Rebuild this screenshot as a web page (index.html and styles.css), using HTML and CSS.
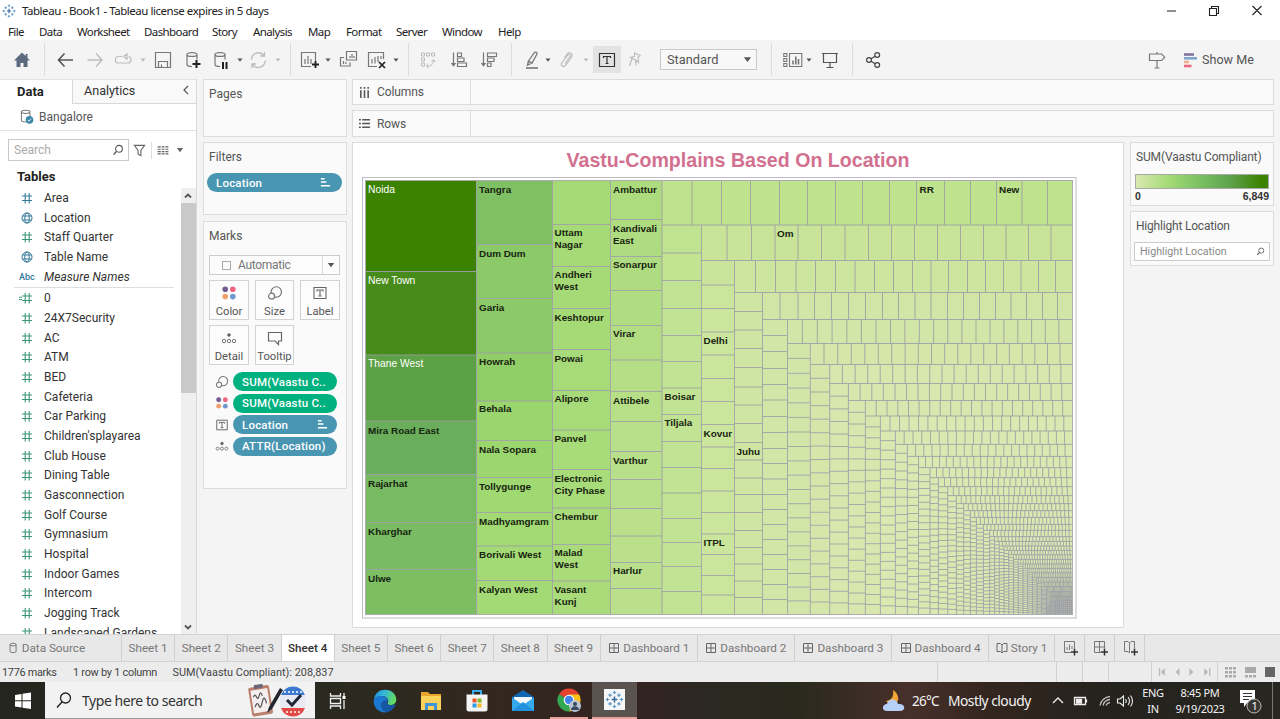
FILE: index.html
```html
<!DOCTYPE html>
<html lang="en">
<head>
<meta charset="utf-8">
<title>Tableau - Book1</title>
<link rel="stylesheet" href="styles.css">
</head>
<body>
<svg class="defs" width="0" height="0">
  <symbol id="caret" viewBox="0 0 8 8"><path d="M1.5 2.5h5L4 5.8z" fill="currentColor"/></symbol>
  <symbol id="down" viewBox="0 0 8 8"><path d="M.8 2h6.4L4 6.2z" fill="currentColor"/></symbol>
  <symbol id="mag" viewBox="0 0 12 12"><circle cx="7" cy="4.8" r="3.4" fill="none" stroke="currentColor" stroke-width="1.1"/><path d="M4.6 7.2 1.6 10.6" stroke="currentColor" stroke-width="1.4"/></symbol>
  <symbol id="dots" viewBox="0 0 16 16"><circle cx="4.2" cy="4.2" r="2.8" fill="#6f5b8f"/><circle cx="11.8" cy="4.2" r="2.8" fill="#ee6480"/><circle cx="4.2" cy="11.6" r="2.8" fill="#f0a06c"/><circle cx="11.8" cy="11.6" r="2.8" fill="#6f97cf"/></symbol>
  <symbol id="size" viewBox="0 0 16 16"><g fill="none" stroke="#777" stroke-width="1.2"><path d="M4.2 8A5.2 5.2 0 1 1 8 12"/><circle cx="4.6" cy="11.2" r="3"/></g></symbol>
  <symbol id="label" viewBox="0 0 16 16"><path d="M2 2.5h12v11H2z" fill="none" stroke="#666" stroke-width="1.1"/><path d="M5 6.5V5h6v1.500M8 5v6M6.500 11h3" fill="none" stroke="#666" stroke-width="1.1"/></symbol>
  <symbol id="detail" viewBox="0 0 16 16"><circle cx="8" cy="5" r="1.800" fill="#666"/><g fill="none" stroke="#777"><circle cx="3" cy="11" r="1.700"/><circle cx="8" cy="11" r="1.700"/><circle cx="13" cy="11" r="1.700"/></g></symbol>
  <symbol id="sorted" viewBox="0 0 12 12"><path d="M1 1.800h4M1 5.500h6M1 9.500h10" stroke="#fff" stroke-width="1.600"/></symbol>
  <symbol id="dash" viewBox="0 0 12 12"><path d="M1.500 1.500h9v9h-9zM6 1.500v9M1.500 6h9" fill="none" stroke="#666"/></symbol>
  <symbol id="book" viewBox="0 0 12 12"><path d="M6 3 4.500 1.500H1v8h3.500L6 11l1.500-1.500H11v-8H7.500zM6 3v8" fill="none" stroke="#666"/></symbol>
  <symbol id="logo" viewBox="0 0 16 16"><path d="M8 5.500v5M5.500 8h5" stroke="#35699f" stroke-width="1.300"/><path d="M8 .5v3M6.500 2h3M8 12.500v3M6.500 14h3M.5 8h3M2 6.500v3M12.500 8h3M14 6.500v3M4.200 2.800v3M2.700 4.300h3M11.800 2.800v3M10.300 4.300h3M4.200 10.200v3M2.700 11.700h3M11.800 10.200v3M10.300 11.700h3" stroke="#5d95c5"/></symbol>
  <symbol id="db" viewBox="0 0 20 20"><path d="M4 4.500v10c0 1 2 2 5 2M14 4.500v5M4 4.500c0-2.600 10-2.600 10 0s-10 2.600-10 0" fill="none" stroke="currentColor" stroke-width="1.200"/></symbol>
</svg>

<header class="titlebar">
  <svg class="applogo"><use href="#logo"/></svg>
  <span class="apptitle">Tableau - Book1 - Tableau license expires in 5 days</span>
  <svg class="winbtns" viewBox="0 0 100 20"><g fill="none" stroke="#222" stroke-width="1.100"><path d="M2 10h9M44.500 7.500h7v7h-7zM46.500 7.500v-2h7v7h-2M87.500 5l9 9M96.500 5l-9 9"/></g></svg>
</header>
<nav class="menubar">
  <span class="m1">File</span><span class="m2">Data</span><span class="m3">Worksheet</span><span class="m4">Dashboard</span><span class="m5">Story</span><span class="m6">Analysis</span><span class="m7">Map</span><span class="m8">Format</span><span class="m9">Server</span><span class="m10">Window</span><span>Help</span>
</nav>

<div class="toolbar">
  <svg class="ic g12" viewBox="0 0 20 20"><path d="M10 2.500 2 10.500h2.500V17H8.500v-4h3v4h4v-6.500H18l-2.500-2.600V4h-2v2z" fill="#5d6b80"/></svg>
  <i class="sep g12"></i>
  <svg class="ic g10" viewBox="0 0 20 20"><path d="M18 10H4M9.500 3.500 3.500 10l6 6.500" fill="none" stroke="#555" stroke-width="1.600"/></svg>
  <svg class="ic g10 dim" viewBox="0 0 20 20"><path d="M2.500 10h14M11 3.500l6 6.500-6 6.500" fill="none" stroke="currentColor" stroke-width="1.400"/></svg>
  <svg class="ic g8 dim" viewBox="0 0 20 20"><path d="M9 6.500H5c-3.500 0-3.500 6.500 0 6.500h10c4 0 4-5.500.5-6.500M14 4v5l-3.500-2.500z" fill="none" stroke="currentColor" stroke-width="1.200"/></svg>
  <svg class="ct g6 dim"><use href="#caret"/></svg>
  <svg class="ic g6 mid" viewBox="0 0 20 20"><path d="M2.500 2.500h15v15h-15zM5.500 17v-5.500h9V17M8.500 17v-2.500" fill="none" stroke="currentColor" stroke-width="1.200"/></svg>
  <svg class="ic g10 mid" viewBox="0 0 20 20"><use href="#db"/><path d="M13.500 10v8M9.500 14h8" stroke="#222" stroke-width="2"/></svg>
  <svg class="ic g8 mid" viewBox="0 0 20 20"><use href="#db"/><path d="M12 12v7M15.500 12v7" stroke="#222" stroke-width="2"/></svg>
  <svg class="ct g5"><use href="#caret"/></svg>
  <svg class="ic g4 dim" viewBox="0 0 20 20"><path d="M3.500 9.500a7 7 0 0 1 12.500-4M17.200 10.500a7 7 0 0 1-12.700 4M16.500 2v4h-4M4 18v-4h4" fill="none" stroke="currentColor" stroke-width="1.300"/></svg>
  <svg class="ct g6 dim"><use href="#caret"/></svg>
  <i class="sep g8"></i>
  <svg class="ic g9 mid" viewBox="0 0 20 20"><path d="M11 16.500H1.500v-14h14V11M5 14V9M8 14V6M11 14V9" fill="none" stroke="currentColor" stroke-width="1.200"/><path d="M15.500 11v7M12 14.500h7" stroke="#222" stroke-width="1.800"/></svg>
  <svg class="ct g4"><use href="#caret"/></svg>
  <svg class="ic g6 mid" viewBox="0 0 20 20"><path d="M8.500 1.500h10v8.500h-10zM6 7.500H2.500V16H12v-3.500M12 8V6M14 8V4M16 8V6M5.500 14v-3M8 14v-2" fill="none" stroke="currentColor" stroke-width="1.200"/></svg>
  <svg class="ic g9 mid" viewBox="0 0 20 20"><path d="M10 16.500H1.500v-14h15V9M5 13.500V9M8 13.500V7M11 12V6M14 9V6" fill="none" stroke="currentColor" stroke-width="1.200"/><path d="m12 12 6 6M18 12l-6 6" stroke="#222" stroke-width="1.700"/></svg>
  <svg class="ct g5"><use href="#caret"/></svg>
  <i class="sep g8"></i>
  <svg class="ic g9 dim" viewBox="0 0 20 20"><path d="M3.500 3h3v3h-3zM8.500 3h3v3h-3zM13.500 3h3v3h-3zM3.500 8h3v3h-3zM3.500 13h3v3h-3zM8.500 16c5 .5 7-2 7-6M13.500 12l2-2.500 2 2.500M10.500 14l-2.200 2 2.200 2" fill="none" stroke="currentColor"/></svg>
  <svg class="ic g11 mid" viewBox="0 0 20 20"><path d="M4.500 2.500v12M8.500 3h4v3.500h-4zM8.500 8h6.500v3.500H8.500zM8.500 13h9v3.500h-9z" fill="none" stroke="currentColor" stroke-width="1.200"/><path d="M1.800 13h5.400l-2.700 3.800z" fill="currentColor"/></svg>
  <svg class="ic g10 mid" viewBox="0 0 20 20"><path d="M4.500 2.500v12M8.500 3h9v3.500h-9zM8.500 8h6.500v3.500H8.500zM8.500 13h3.500v3.500H8.500z" fill="none" stroke="currentColor" stroke-width="1.200"/><path d="M1.800 13h5.400l-2.700 3.800z" fill="currentColor"/></svg>
  <i class="sep g12"></i>
  <svg class="ic g10 mid" viewBox="0 0 20 20"><path d="m6.500 11 6-8.500c1-1 3 .3 2.500 1.500l-5 9zM6.500 11l-1 4 4.500-2" fill="none" stroke="currentColor" stroke-width="1.300"/><path d="M4 18h12" stroke="#777" stroke-width="1.600"/></svg>
  <svg class="ct g2"><use href="#caret"/></svg>
  <svg class="ic g5 dim" viewBox="0 0 20 20"><path d="m8 13.500 5-7c1-1.500-1-3-2.200-1.500L5 12.500c-2 3 1.500 5.500 3.700 2.700l5.500-7.700c2.500-4-1.500-6.500-4-3.500L7.500 8" fill="none" stroke="currentColor" stroke-width="1.200"/></svg>
  <svg class="ct g5 dim"><use href="#caret"/></svg>
  <span class="tbtn g3"><svg class="ic" viewBox="0 0 20 20"><path d="M2.500 3.500h15v13h-15z" fill="none" stroke="#333" stroke-width="1.200"/><path d="M6.500 8V6.500h7V8M10 6.500v7M8.500 13.500h3" fill="none" stroke="#333" stroke-width="1.200"/></svg></span>
  <svg class="ic g4 dim" viewBox="0 0 20 20"><path d="m9.500 3 5.500 2.500-2 2 .5 5-3-2.500-5-2.500 4-1zM7 8.500 4.500 16M10.500 10.500l.5 5" fill="none" stroke="currentColor" stroke-width="1.200"/></svg>
  <div class="fit g15"><span>Standard</span><svg><use href="#down"/></svg></div>
  <i class="sep g14"></i>
  <svg class="ic g11 mid" viewBox="0 0 20 20"><path d="M6.500 3.500h12.300v13H6.500zM.8 3.500h3v3h-3zM.8 8.500h3v3h-3zM.8 13.500h3v3h-3z" fill="none" stroke="currentColor" stroke-width="1.100"/><path d="M10 14.500v-4M12.800 14.500v-8M15.500 14.500V9" stroke="currentColor" stroke-width="1.600"/></svg>
  <svg class="ct g2"><use href="#caret"/></svg>
  <svg class="ic g7" viewBox="0 0 20 20"><path d="M2 3.500h16M3.500 4v8.500h13V4M10 12.500V17M6.500 17.500h7" fill="none" stroke="#555" stroke-width="1.200"/></svg>
  <i class="sep g12"></i>
  <svg class="ic g10" viewBox="0 0 20 20"><g fill="none" stroke="#444" stroke-width="1.200"><circle cx="6" cy="10" r="2.400"/><circle cx="14.200" cy="5" r="2.400"/><circle cx="14.200" cy="15" r="2.400"/><path d="m8 8.700 4.200-2.500M8 11.300l4.200 2.500"/></g></svg>
  <svg class="ic sign" viewBox="0 0 20 20"><path d="M2.500 4h12.200l3 3.200-3 3.300H2.500zM10 2v2M10 10.500v7.500M7.500 18h5" fill="none" stroke="#777" stroke-width="1.200"/></svg>
  <svg class="showic" viewBox="0 0 14 16"><path d="M0 2.500h10" stroke="#82739e" stroke-width="2.600"/><path d="M0 6.300h13" stroke="#7fa5ce" stroke-width="2.600"/><path d="M0 10h5" stroke="#f3b08c" stroke-width="2.600"/><path d="M0 14h7.500" stroke="#e8697b" stroke-width="2.600"/></svg>
  <span class="showme">Show Me</span>
</div>

<main class="work">
  <aside class="datapane">
    <div class="ptabs"><b>Data</b><span class="an"><span>Analytics</span><svg viewBox="0 0 8 10"><path d="M6 1 2 5l4 4" fill="none" stroke="#555" stroke-width="1.200"/></svg></span></div>
    <div class="source"><svg viewBox="0 0 20 20"><use href="#db"/><circle cx="13.500" cy="14" r="4.500" fill="#3c88a8"/><path d="m11.500 14 1.500 1.600 2.500-3" fill="none" stroke="#fff"/></svg><span>Bangalore</span></div>
    <div class="find">
      <div class="search"><span>Search</span><svg><use href="#mag"/></svg></div>
      <svg class="funnel" viewBox="0 0 14 14"><path d="M1.500 1.500h11L8.500 7v5.500l-3-1.500V7z" fill="none" stroke="#666" stroke-width="1.200"/></svg>
      <i class="bar"></i>
      <svg class="viewas" viewBox="0 0 12 10"><path d="M0 1h3.500M4.500 1h3.200M8.700 1H12M0 3.600h3.500M4.500 3.600h3.200M8.700 3.600H12M0 6.200h3.500M4.500 6.200h3.200M8.700 6.200H12M0 8.800h3.500M4.500 8.800h3.200M8.700 8.800H12" stroke="#666" stroke-width="1.300"/></svg>
      <svg class="vdown"><use href="#down"/></svg>
    </div>
    <h2>Tables</h2>
    <div class="fieldwrap">
      <div class="fields" id="fields"></div>
      <div class="scroll"><svg viewBox="0 0 14 14"><path d="m4 8.500 3-3 3 3" fill="none" stroke="#555" stroke-width="1.800"/></svg><i></i><svg viewBox="0 0 14 14"><path d="m4 5.500 3 3 3-3" fill="none" stroke="#555" stroke-width="1.800"/></svg></div>
    </div>
  </aside>

  <section class="cards">
    <div class="card pages"><span class="ttl">Pages</span></div>
    <div class="card filters"><span class="ttl">Filters</span><div class="pill blue wide"><span>Location</span><svg><use href="#sorted"/></svg></div></div>
    <div class="card marks"><span class="ttl">Marks</span>
      <div class="auto"><i></i><span>Automatic</span><b><svg><use href="#down"/></svg></b></div>
      <div class="btns">
        <div><svg><use href="#dots"/></svg>Color</div><div><svg><use href="#size"/></svg>Size</div><div><svg><use href="#label"/></svg>Label</div>
        <div><svg><use href="#detail"/></svg>Detail</div><div><svg viewBox="0 0 16 16"><path d="M1.500 2.500h13v8.500h-3v3.500L8 11H1.500z" fill="none" stroke="#666" stroke-width="1.200"/></svg>Tooltip</div>
      </div>
      <div class="enc">
        <svg><use href="#size"/></svg><div class="pill green"><span>SUM(Vaastu C..</span></div>
        <svg><use href="#dots"/></svg><div class="pill green"><span>SUM(Vaastu C..</span></div>
        <svg><use href="#label"/></svg><div class="pill blue"><span>Location</span><svg><use href="#sorted"/></svg></div>
        <svg><use href="#detail"/></svg><div class="pill blue"><span>ATTR(Location)</span></div>
      </div>
    </div>
  </section>

  <section class="center">
    <div class="shelf"><div><svg viewBox="0 0 12 12"><path d="M2 3.500V12M6 3.500V12M10 3.500V12M2 0v2M6 0v2M10 0v2" stroke="#555" stroke-width="1.700"/></svg><span>Columns</span></div></div>
    <div class="shelf rows"><div><svg viewBox="0 0 12 12"><path d="M3.500 2H12M3.500 6H12M3.500 10H12M0 2h2M0 6h2M0 10h2" stroke="#555" stroke-width="1.700"/></svg><span>Rows</span></div></div>
    <div class="canvas">
      <div class="viz">
        <h1>Vastu-Complains Based On Location</h1>
        <svg id="treemap" viewBox="362 177 715 442" width="715" height="442"></svg>
      </div>
      <div class="legends">
        <div class="legend"><span>SUM(Vaastu Compliant)</span><div class="ramp"></div><div class="ends"><b>0</b><b>6,849</b></div></div>
        <div class="hilite"><span>Highlight Location</span><div><em>Highlight Location</em><svg><use href="#mag"/></svg></div></div>
      </div>
    </div>
  </section>
</main>

<nav class="sheets">
  <span class="ds"><svg viewBox="0 0 12 14"><path d="M2 3v8c0 1.800 7 1.800 7 0V3M2 3c0-2 7-2 7 0s-7 2-7 0" fill="none" stroke="#666"/></svg><em>Data Source</em></span>
  <span class="sh">Sheet 1</span><span class="sh">Sheet 2</span><span class="sh">Sheet 3</span><span class="sh on">Sheet 4</span><span class="sh">Sheet 5</span><span class="sh">Sheet 6</span><span class="sh">Sheet 7</span><span class="sh">Sheet 8</span><span class="sh">Sheet 9</span>
  <span class="da"><svg><use href="#dash"/></svg>Dashboard 1</span><span class="da"><svg><use href="#dash"/></svg>Dashboard 2</span><span class="da"><svg><use href="#dash"/></svg>Dashboard 3</span><span class="da"><svg><use href="#dash"/></svg>Dashboard 4</span>
  <span class="st"><svg><use href="#book"/></svg>Story 1</span>
  <span class="nw"><svg viewBox="0 0 16 16"><path d="M9 12.500H2.500v-11h10V8M5 10V7M7.500 10V4.500M10 9V6" fill="none" stroke="#777"/><path d="M12.500 8.500v7M9 12h7" stroke="#333" stroke-width="1.500"/></svg></span>
  <span class="nw"><svg viewBox="0 0 16 16"><path d="M9 12.500H2.500v-11h10V8M7.500 1.500v11M2.500 7h10" fill="none" stroke="#777"/><path d="M12.500 8.500v7M9 12h7" stroke="#333" stroke-width="1.500"/></svg></span>
  <span class="nw"><svg viewBox="0 0 16 16"><path d="M7.500 13V3L6 1.500H2.500v10H6zM7.500 3 9 1.500h3.500V8" fill="none" stroke="#777"/><path d="M12.500 8.500v7M9 12h7" stroke="#333" stroke-width="1.500"/></svg></span>
</nav>
<div class="status">
  <span class="s1">1776 marks</span><span class="s2">1 row by 1 column</span><span>SUM(Vaastu Compliant): 208,837</span>
  <div class="statnav"><i></i><i></i><i></i><i></i>
    <svg class="nav" viewBox="0 0 66 20"><g fill="#b9b9b9"><path d="M7 6h1.300v8H7zM13 6v8l-4-4zM28 6v8l-4-4zM38 6v8l4-4zM53 6v8l4-4zM58 6h1.300v8H58z"/></g></svg>
    <svg class="modes" viewBox="0 0 62 20"><g fill="#aaa"><path d="M7 5h3v2.500H7zM11 5h3v2.500h-3zM15 5h3v2.500h-3zM7 9h3v2.500H7zM11 9h3v2.500h-3zM15 9h3v2.500h-3zM7 13h3v2.500H7zM11 13h3v2.500h-3zM15 13h3v2.500h-3zM27 5h11v6H27zM27 13h3v2.500h-3zM31 13h3v2.500h-3zM35 13h3v2.500h-3z"/></g><path d="M47 5h10v10H47z" fill="#666"/></svg>
  </div>
</div>

<footer class="taskbar">
  <svg class="start" viewBox="0 0 45 37"><path d="M15 13l6.500-1v6.200H15zM22.500 11.800 31 10.500v7.700h-8.500zM15 19.200h6.500v6.200l-6.500-1zM22.500 19.200H31V27l-8.500-1.300z" fill="#fff"/></svg>
  <div class="tsearch">
    <svg class="tm" viewBox="0 0 18 18"><circle cx="10.500" cy="7" r="5" fill="none" stroke="#222" stroke-width="1.300"/><path d="m7 11-5 5.500" stroke="#222" stroke-width="1.400"/></svg>
    <span>Type here to search</span>
    <svg class="art" viewBox="0 0 64 36"><g transform="rotate(-9 16 18)"><rect x="4" y="4" width="21" height="29" rx="2" fill="#b9806c"/><rect x="6" y="7" width="17" height="23" fill="#f5eeee"/><rect x="10" y="2" width="9" height="4" rx="1" fill="#6c6577"/><path d="M8 14q2-4 3 0t3-1 3 1M8 24q3-6 4-1t4-3 4 2" fill="none" stroke="#555" stroke-width="1.200"/></g><path d="M21 31l2-6L34 6l3 2-11 19z" fill="#23262e"/><ellipse cx="47" cy="19.500" rx="13" ry="14" fill="#e8e9f2"/><path d="M35 13a13 14 0 0 1 24 0z" fill="#3b78cf"/><path d="M35 26a13 14 0 0 0 24 0z" fill="#e34a45"/><path d="M38 10h18M40 30h14" stroke="#fff" stroke-width="1.500" stroke-dasharray="2 2"/><path d="m41 18 5 5 9-10" fill="none" stroke="#202738" stroke-width="3"/></svg>
  </div>
  <svg class="tv" viewBox="0 0 20 20"><path d="M2.500 2v3h10V2M2.500 18v-3h10v3M2.500 7.500h10v5h-10zM16 2v4M16 9v9" fill="none" stroke="#eee" stroke-width="1.300"/><path d="M14.500 5h3v3h-3z" fill="#fff"/></svg>
  <svg class="ap" viewBox="0 0 24 24"><defs><linearGradient id="ed" x1="0" y1="0" x2="1" y2=".3"><stop offset="0" stop-color="#1f8fe0"/><stop offset=".5" stop-color="#35b8d8"/><stop offset="1" stop-color="#62da65"/></linearGradient></defs><path d="M1 10C2 4 6.500.7 12 .7c7 0 11.300 5 11.300 9.800 0 4-3 5.500-6 5.500-2.500 0-3.500-1-2.500-2.500C16.500 10 13 7 9 7 5 7 2 9 1 10z" fill="url(#ed)"/><path d="M.7 12C1 8.500 4.500 7 8 7c4.500 0 7.500 3 6.500 5.500C12 10.500 8.500 12.500 8.500 16c0 4 3 7 7 7-8 2-15-3-14.800-11z" fill="#1a78d0"/><path d="M8.500 16c0-3 2.500-5 5.500-4-.5 4 3.500 5.500 8 3.200.5 0 .8.200.5.800C20.500 20 17 23 15 23c-4 0-6.500-3.500-6.500-7z" fill="#1556a5"/></svg>
  <svg class="ap" viewBox="0 0 24 24"><path d="M2 3h7l2 2h11v16H2z" fill="#e8a52d"/><path d="M2 7h20v14H2z" fill="#fbd35b"/><path d="M6 21v-7h12v7h-3v-4H9v4z" fill="#3f93d8"/></svg>
  <svg class="ap" viewBox="0 0 24 24"><path d="M8 6V2h8v4" fill="none" stroke="#38aef2" stroke-width="2"/><path d="M1.500 5.500h21V20a2.500 2.500 0 0 1-2.500 2.500H4A2.500 2.500 0 0 1 1.500 20z" fill="#f4f4f4"/><path d="M7.500 9.500h4v4h-4z" fill="#ef5329"/><path d="M12.500 9.500h4v4h-4z" fill="#7fba27"/><path d="M7.500 14.500h4v4h-4z" fill="#2a9fe5"/><path d="M12.500 14.500h4v4h-4z" fill="#fbb829"/></svg>
  <svg class="ap" viewBox="0 0 24 24"><path d="M1 8 12 1l11 7v14H1z" fill="#1266b4"/><path d="M3 8h18v8H3z" fill="#f3f8fc"/><path d="M1 8.500 12 16l11-7.500V22H1z" fill="#35a9ea"/><path d="m1 22 11-9 11 9z" fill="#2191dd"/></svg>
  <div class="run"><svg class="ap" viewBox="0 0 24 24"><path d="M12 12 2 6.200A11.500 11.500 0 0 1 22 6.200z" fill="#e5412f"/><path d="M12 12 2 6.200A11.500 11.500 0 0 0 12 23.500l4-7z" fill="#33a852"/><path d="M12 6.500h10.200A11.500 11.500 0 0 1 12 23.500l4-8z" fill="#fbc116"/><circle cx="12" cy="12" r="5.300" fill="#fff"/><circle cx="12" cy="12" r="4.200" fill="#4184ea"/><circle cx="18" cy="18" r="6" fill="#b9c4d3"/><circle cx="18" cy="16" r="2" fill="#38475d"/><path d="M14 22c0-5 8-5 8 0z" fill="#38475d"/></svg></div>
  <div class="run act"><svg class="tl" viewBox="-1 -1 18 18"><path d="M-1-1h18v18H-1z" fill="#f4f6f8"/><use href="#logo" width="16" height="16"/></svg></div>
  <svg class="cloud" viewBox="0 0 24 24"><path d="M11 1c1 6-1 10-7 11 5 6 14 2 12-4-1-4-3-6-5-7" fill="#f3a536"/><path d="M5 22c-6 0-5-7 0-7 1-6 10-6 11 0 8-1 8 7 2 7z" fill="#b6d0f7"/></svg>
  <span class="temp">26°C</span><span class="wx">Mostly cloudy</span>
  <svg class="tray" viewBox="0 0 84 20"><g fill="none" stroke="#eee" stroke-width="1.300"><path d="m2 12 5-5 5 5M23.500 6.500h11v7h-11zM35.500 8.500v3"/><path d="M25.500 8.500h5v3.500h-5z" fill="#eee"/><path d="M49 14.500a11 11 0 0 1 10-9M52 14.500a8 8 0 0 1 7-6M55 14.500a5 5 0 0 1 4-3" stroke="#bbb"/><path d="M66.500 8h2.500l3.500-3v10l-3.500-3h-2.500zM74.500 8q1.500 2 0 4M77 6q3 4 0 8M79.500 4.500q4 5.500 0 11" stroke-width="1.100"/></g></svg>
  <div class="lang"><span>ENG</span><span>IN</span></div>
  <div class="clock"><span>8:45 PM</span><span>9/19/2023</span></div>
  <svg class="note" viewBox="0 0 26 28"><path d="M2 3h15v13h-8l-3 4v-4H2z" fill="#fff"/><path d="M5 6.500h9M5 9.500h9M5 12.500h6" stroke="#333"/><circle cx="16" cy="19" r="7" fill="#3a3733" stroke="#bbb"/><text x="13.500" y="23" class="badge">1</text></svg>
  <i class="peek"></i>
</footer>
<script src="app.js"></script>
</body>
</html>
```

FILE: styles.css
```css
* { box-sizing: border-box; }
html, body { margin: 0; height: 719px; overflow: hidden; }
body { display: flex; flex-direction: column; width: 1280px; background: #f4f4f4; font: 12px Roboto, sans-serif; color: #333; white-space: nowrap; }
svg { display: block; flex: none; }
.defs { position: absolute; }
i, em { font-style: normal; flex: none; }

.titlebar { height: 21px; display: flex; align-items: center; background: #fff; padding-left: 2px; flex: none; }
.applogo { width: 14px; height: 14px; }
.apptitle { font: 11.500px "Noto Sans", sans-serif; letter-spacing: -.46px; margin-left: 6px; color: #222; }
.winbtns { width: 100px; height: 20px; margin: 0 15px 0 auto; }
.menubar { height: 19px; display: flex; align-items: center; background: #fff; padding: 2px 0 0 8px; font: 11.500px "Noto Sans", sans-serif; letter-spacing: -.6px; color: #222; flex: none; }
.menubar span { flex: none; }
.m1 { width: 31px; } .m2 { width: 38px; } .m3 { width: 67px; } .m4 { width: 68px; } .m5 { width: 41px; } .m6 { width: 55px; } .m7 { width: 38px; } .m8 { width: 50px; } .m9 { width: 46px; } .m10 { width: 56px; }

.toolbar { height: 39px; display: flex; align-items: center; flex: none; color: #555; background: #f4f4f4; }
.ic { width: 20px; height: 20px; } .ct { width: 8px; height: 8px; }
.dim { color: #bcbcbc; } .mid { color: #777; }
.sep { width: 1px; height: 33px; background: #dcdcdc; }
.g2 { margin-left: 2px; } .g3 { margin-left: 3px; } .g4 { margin-left: 4px; } .g5 { margin-left: 5px; } .g6 { margin-left: 6px; } .g7 { margin-left: 7px; } .g8 { margin-left: 8px; } .g9 { margin-left: 9px; } .g10 { margin-left: 10px; } .g11 { margin-left: 11px; } .g12 { margin-left: 12px; } .g14 { margin-left: 14px; } .g15 { margin-left: 15px; }
.sign { margin-left: 264px; }
.tbtn { width: 28px; height: 27px; background: #e3e3e3; display: flex; align-items: center; justify-content: center; }
.fit { width: 97px; height: 21px; border: 1px solid #c9c9c9; background: #f8f8f8; display: flex; align-items: center; justify-content: space-between; padding: 0 4px 0 6px; font-size: 12.800px; }
.fit svg { width: 9px; height: 9px; }
.showic { width: 14px; height: 16px; margin-left: 17px; }
.showme { font-size: 12.600px; margin-left: 4px; }

.work { height: 555px; display: flex; flex: none; }
.datapane { width: 197px; border-right: 1px solid #d8d8d8; background: #fff; display: flex; flex-direction: column; border-top: 1px solid #e2e2e2; }
.ptabs { height: 24px; display: flex; flex: none; }
.ptabs b { width: 72px; padding: 4px 0 0 17px; font-size: 13px; color: #222; }
.an { flex: 1; background: #f9f9f9; border: solid #d8d8d8; border-width: 0 0 1px 1px; display: flex; justify-content: space-between; padding: 3px 6px 0 11px; font-size: 12.600px; }
.an svg { width: 8px; height: 10px; margin-top: 2px; }
.source { height: 27px; border-bottom: 1px solid #e0e0e0; display: flex; align-items: center; padding: 0 0 1px 18px; font-size: 12px; color: #555; flex: none; }
.source svg { width: 17px; height: 17px; margin-right: 4px; color: #777; }
.find { height: 38px; display: flex; align-items: center; padding-left: 8px; flex: none; color: #666; }
.search { width: 121px; height: 22px; border: 1px solid #c8c8c8; display: flex; align-items: center; justify-content: space-between; padding: 0 4px 0 5px; color: #aaa; font-size: 12px; }
.search svg { width: 12px; height: 12px; color: #555; }
.funnel { width: 13px; height: 13px; margin-left: 4px; }
.bar { width: 1px; height: 17px; background: #ddd; margin: 0 5px; }
.viewas { width: 12px; height: 9px; } .vdown { width: 8px; height: 8px; margin-left: 7px; }
.datapane h2 { font-size: 13px; margin: 0; height: 19px; line-height: 15px; padding-left: 17px; color: #222; flex: none; }
.fieldwrap { flex: 1; min-height: 0; display: flex; }
.fields { flex: 1; overflow: hidden; padding-right: 7px; }
.field { height: 19.68px; display: flex; align-items: center; padding-left: 19px; letter-spacing: .02px; }
.field svg { width: 16px; height: 14px; margin-right: 9px; color: #3d9678; }
.field.dim2 svg { color: #34799a; }
.field .abc { width: 16px; margin-right: 9px; font-size: 9px; font-style: normal; font-weight: 500; color: #34799a; letter-spacing: 0; }
.rule { height: 1px; background: #dedede; margin: 1px 0 0 14px; }
.mn { font-style: italic; letter-spacing: .05px; }
.scroll { width: 15px; background: #efefef; display: flex; flex-direction: column; }
.scroll svg { width: 14px; height: 14px; margin-top: 1px; }
.scroll i { height: 190px; background: #c9c9c9; margin-bottom: auto; }

.cards { width: 144px; margin-left: 6px; display: flex; flex-direction: column; }
.card { border: 1px solid #dcdcdc; background: #fafafa; display: flex; flex-direction: column; padding: 7px 5px 0 6px; color: #555; }
.ttl { height: 15px; line-height: 15px; flex: none; margin-left: -1px; }
.pages { height: 58px; margin-bottom: 5px; } .filters { height: 73px; padding-left: 3px; padding-right: 4px; margin-bottom: 6px; } .filters .ttl { padding-left: 3px; } .marks { height: 268px; padding-left: 5px; padding-right: 6px; } .marks .ttl { margin-left: 0; }
.pill { height: 19px; border-radius: 10px; color: #fff; display: flex; align-items: center; justify-content: space-between; padding: 0 9px 0 9px; font-weight: 500; letter-spacing: .2px; font-size: 11.5px; }
.pill.blue { background: #4996b2; } .pill.green { background: #00b180; }
.pill svg { width: 11px; height: 11px; }
.wide { margin-top: 8px; padding-right: 11px; }
.auto { height: 20px; border: 1px solid #ccc; background: #fcfcfc; margin: 11px 0 0; display: flex; align-items: center; padding-left: 12px; flex: none; color: #777; letter-spacing: -.3px; }
.auto i { width: 9px; height: 9px; border: 1px solid #aaa; margin-right: 7px; }
.auto b { margin-left: auto; width: 17px; height: 18px; border-left: 1px solid #ddd; display: flex; align-items: center; justify-content: center; color: #555; }
.auto svg { width: 8px; height: 8px; }
.btns { display: grid; grid-template-columns: 40px 39px 40px; grid-auto-rows: 40px; gap: 5px 6px; margin-top: 5px; font-size: 11.2px; }
.btns div { border: 1px solid #d3d3d3; background: #fcfcfc; display: flex; flex-direction: column; align-items: center; padding-top: 4px; gap: 4px; line-height: 13px; }
.btns svg { width: 16px; height: 16px; }
.enc { display: grid; grid-template-columns: 14px 104px; column-gap: 4px; grid-auto-rows: 19px; row-gap: 2.600px; align-items: center; margin: 7px 0 0 6px; }
.enc > svg { width: 14px; height: 14px; }

.center { margin-left: 5px; width: 922px; display: flex; flex-direction: column; }
.shelf { height: 26px; border: 1px solid #dcdcdc; background: #fafafa; flex: none; }
.shelf.rows { margin: 5px 0; height: 27px; }
.shelf div { width: 118px; height: 100%; border-right: 1px solid #dcdcdc; display: flex; align-items: center; padding-left: 6px; color: #555; letter-spacing: -.1px; }
.shelf svg { width: 11px; height: 11px; margin-right: 7px; }
.canvas { display: flex; gap: 6px; }
.viz { width: 772px; height: 486px; background: #fff; border: 1px solid #dcdcdc; padding-left: 9px; }
.viz h1 { margin: 0; font: bold 19.600px/34px "Liberation Sans", sans-serif; text-align: center; color: #d2708f; width: 752px; height: 34px; }
.lbl { font: bold 9.900px "Liberation Sans", sans-serif; fill: #172410; }
.lbl.inv { fill: #fff; font-size: 10.300px; font-weight: normal; }
.legends { width: 144px; display: flex; flex-direction: column; gap: 5px; }
.legend { height: 64px; border: 1px solid #dcdcdc; background: #fafafa; padding: 7px 4px; font-size: 12px; color: #555; letter-spacing: -.16px; }
.legend > span, .hilite > span { display: block; height: 15px; line-height: 15px; padding-left: 1px; }
.ramp { height: 15px; margin-top: 9px; border: 1px solid #a9a9a9; background: linear-gradient(90deg, #d9e8b0, #a4da76 25%, #7fc466 45%, #5da14b 72%, #3b8200 95%); }
.ends { display: flex; justify-content: space-between; font: bold 10.500px/14px "Liberation Sans", sans-serif; color: #333; letter-spacing: 0; }
.hilite { height: 55px; border: 1px solid #dcdcdc; background: #fafafa; padding: 7px 3px 0 4px; color: #555; }
.hilite > span { letter-spacing: -.2px; }
.hilite div { height: 19px; border: 1px solid #ccc; background: #fff; margin-top: 8px; margin-left: -1px; display: flex; align-items: center; justify-content: space-between; padding: 0 4px 0 5px; font-size: 10.700px; color: #888; }
.hilite svg { width: 9px; height: 9px; color: #555; }

.sheets { height: 28px; display: flex; flex: none; border: solid #d3d3d3; border-width: 1px 0; background: #e8e8e8; font-size: 11.700px; color: #777; }
.sheets span { display: flex; align-items: center; justify-content: center; border-right: 1px solid #cfcfcf; flex: none; }
.ds { width: 122px; padding-right: 28px; } .ds svg { width: 11px; height: 12px; margin-right: 3px; }
.sh { width: 53.200px; }
.sheets .on { background: #fff; color: #333; font-weight: 500; }
.da { width: 97.100px; } .da svg { width: 12px; height: 12px; margin-right: 3px; }
.st { width: 66px; } .st svg { width: 12px; height: 12px; margin-right: 3px; }
.nw { width: 30px; } .nw svg { width: 16px; height: 16px; }
.status { height: 20px; display: flex; align-items: center; flex: none; background: #ececec; font-size: 10.900px; color: #444; padding-left: 2px; }
.status span { flex: none; }
.s1 { width: 71px; letter-spacing: -.3px; } .s2 { width: 99.500px; letter-spacing: -.25px; }
.statnav { margin-left: auto; display: flex; height: 20px; }
.statnav i { border-left: 1px solid #d0d0d0; width: 26px; }
.statnav i:first-child { width: 119px; } .statnav i:nth-child(4) { width: 43px; }
.nav { width: 66px; height: 20px; border-left: 1px solid #d0d0d0; } .modes { width: 63px; height: 20px; border-left: 1px solid #d0d0d0; }

.taskbar { height: 37px; display: flex; align-items: center; flex: none; background: linear-gradient(90deg, #25251f 0, #2b2a20 27%, #33271f 39%, #332220 49%, #2c2822 55%, #29291e 62%, #48302a 71%, #33261f 77%, #24221d 87%, #292721 100%); color: #f3f3f3; font-family: "Noto Sans", sans-serif; }
.start { width: 45px; height: 37px; }
.tsearch { width: 270px; height: 37px; background: #f2f2f2; display: flex; align-items: center; color: #333; font-size: 14px; letter-spacing: -.45px; flex: none; border-bottom: 1px solid #999; }
.tm { width: 18px; height: 18px; margin-left: 10px; } .tsearch span { margin-left: 9px; width: 121px; }
.art { width: 64px; height: 36px; margin-left: 43px; }
.tv { width: 20px; height: 20px; margin-left: 13px; }
.ap { width: 24px; height: 24px; margin-left: 25px; } .ap + .ap { margin-left: 22px; }
.run { width: 38px; height: 37px; border-bottom: 2px solid #e9a09a; margin-left: 15px; display: flex; align-items: center; justify-content: center; flex: none; }
.run .ap { margin: 0; } .run.act { width: 45px; margin-left: 4px; background: #5a5350; } .tl { width: 21px; height: 21px; }
.cloud { width: 24px; height: 26px; margin-left: 245px; }
.temp { font-size: 13.500px; letter-spacing: -.7px; margin-left: 6px; width: 36px; flex: none; } .wx { font-size: 13.800px; letter-spacing: -.5px; width: 103px; flex: none; }
.tray { width: 84px; height: 20px; }
.lang, .clock { display: flex; flex-direction: column; align-items: center; font-size: 11px; line-height: 16px; letter-spacing: -.35px; flex: none; }
.lang { width: 28px; margin-left: 4px; } .clock { width: 54px; margin-left: 6px; }
.note { width: 26px; height: 28px; margin-left: 11px; }
.badge { font: 11px "Noto Sans", sans-serif; fill: #fff; }
.peek { width: 1px; height: 37px; background: #777; margin-left: 8px; }
```

FILE: app.js
```js
// ---- Data pane fields ----
const hash = '<svg viewBox="0 0 16 14"><path d="M3 5h10M3 9.500h10M6.200 2v10.500M10.200 2v10.500" fill="none" stroke="currentColor" stroke-width="1.100"/></svg>';
const calc = '<svg viewBox="0 0 16 14"><path d="M3 5h10M3 9.500h10M6.200 2v10.500M10.200 2v10.500M0 6.200h3M0 8.500h3" fill="none" stroke="currentColor" stroke-width="1.100"/></svg>';
const globe = '<svg viewBox="0 0 16 14"><g fill="none" stroke="currentColor"><circle cx="8" cy="7" r="5"/><ellipse cx="8" cy="7" rx="2.200" ry="5"/><path d="M3.500 5h9M3.500 9h9"/></g></svg>';
const row = (icon, name, cls = '') => `<div class="field ${cls}">${icon}<span>${name}</span></div>`;
document.getElementById('fields').innerHTML =
  row(hash, 'Area', 'dim2') + row(globe, 'Location', 'dim2') + row(hash, 'Staff Quarter') +
  row(globe, 'Table Name', 'dim2') + row('<b class="abc">Abc</b>', 'Measure Names', 'mn') +
  '<div class="rule"></div>' + row(calc, '0') +
  ['24X7Security', 'AC', 'ATM', 'BED', 'Cafeteria', 'Car Parking', "Children'splayarea", 'Club House',
   'Dining Table', 'Gasconnection', 'Golf Course', 'Gymnasium', 'Hospital', 'Indoor Games', 'Intercom',
   'Jogging Track', 'Landscaped Gardens'].map(n => row(hash, n)).join('');

// ---- Treemap: strips alternate between columns on the left and rows on the top ----
const R = 1072.5, B = 614.5;
const out = [], lines = [];
const rect = (x, y, w, h, c) => out.push(`<rect x="${x}" y="${y}" width="${w}" height="${h}" fill="${c}"/>`);
const line = (x1, y1, x2, y2) => lines.push(`M${x1.toFixed(1)} ${y1.toFixed(1)}L${x2.toFixed(1)} ${y2.toFixed(1)}`);
const colStrip = (x1, x2, ys, colors) => {
  ys.slice(1).forEach((y, i) => {
    rect(x1, ys[i], x2 - x1, y - ys[i], colors[Math.min(i, colors.length - 1)]);
    line(x1, y, x2, y);
  });
  line(x2, ys[0], x2, B);
};
const rowStrip = (y1, y2, xs, color) => {
  rect(xs[0], y1, R - xs[0], y2 - y1, color);
  xs.slice(1).forEach(x => line(x, y1, x, y2));
  line(xs[0], y2, R, y2);
};
const spread = (a, b, n) => Array.from({ length: n + 1 }, (_, i) => {
  const t = i / n;
  return a + (b - a) * (t + 0.05 * t * (1 - t));
});

colStrip(366, 476.5, [181, 271.5, 355, 421, 474.5, 522.5, 569.5, B], ['#3b8200', '#478c1b', '#5ca145', '#6aae5c', '#77ba62', '#79bb62', '#7dbe63']);
colStrip(476.5, 552.5, [181, 244.5, 298.5, 353, 401, 440.5, 477.5, 512.5, 546, 580.5, B], ['#7fc065', '#8cc968', '#8cc968', '#92ce68', '#9ad56e', '#9cd66f', '#a0d872', '#a2d973', '#a3da75', '#a4da75']);
colStrip(552.5, 610.5, [181, 224.5, 266.5, 308.5, 349.5, 390.5, 430, 469.5, 508, 544.5, 581, B], ['#a5da76', '#a5da76', '#a6da77', '#a6da77', '#a7da78', '#a7da78', '#a8db79', '#a8db79', '#aadb7b']);
colStrip(610.5, 662, [181, 219.5, 256.5, 290.5, 325.5, 360, 391.5, 421.5, 451.5, 479.5, 508.5, 536, 562.5, 588.5, B], ['#addc7e', '#afdc80', '#afdc80', '#b1dd82', '#b2dd83', '#b5de86', '#b6df87', '#b8df89', '#b8df89', '#b8df89', '#bae08b']);
rowStrip(181, 225, [662, 692, 721.5, 750.5, 779.5, 807.5, 835.5, 862.5, 889.5, 916.5, 944.5, 970.5, 996.5, 1022, 1047.5], '#bee28e');
colStrip(662, 701.5, [225, 253, 280.5, 308.5, 335.5, 361.5, 388, 414.5, 441.5, 467.5, 493, 518.5, 542.5, 566.5, 591.5, B], ['#c0e391', '#c2e392', '#c2e393']);
rowStrip(225, 260.5, [701.5, 727, 751.5, 775, 798, 821.5, 845, 868.5, 891.5, 914.5, 937.5, 960.5, 983.5, 1006, 1028.5, 1051], '#c7e499');
colStrip(701.5, 734.5, [260.5, 285, 308.5, 332, 355, 378.5, 401.5, 424.5, 447, 468.5, 491, 512.5, 534, 554.5, 575.5, 595, B], ['#c9e59c', '#cae69d']);
rowStrip(260.5, 292.5, [734.5, 755.5, 775.5, 796, 815.5, 835.5, 855, 874.5, 893.5, 912.5, 931, 948.5, 967.5, 985.5, 1003.5, 1021, 1038.5, 1055.5], '#cce59f');
colStrip(734.5, 762.5, [292.5, 311.5, 330, 348.5, 367.5, 387, 405, 423.5, 442.5, 460, 478, 494.5, 512.5, 530.5, 547.5, 564, 581, 597.5, B], ['#cfe5a3']);
rowStrip(292.5, 319.5, [762.5, 780, 798, 814.5, 831.5, 848.5, 865.5, 882.5, 898.5, 915, 931, 947.5, 963.5, 979.5, 995.5, 1011, 1026.5, 1042.5, 1057.5], '#d1e5a6');
colStrip(762.5, 787.5, [319.5, 335.5, 351.5, 368.5, 384.5, 400, 416.5, 432.5, 448.5, 463.5, 479, 494.5, 509.5, 524.5, 539.5, 554.5, 569.5, 584.5, 599.5, B], ['#d2e6a8']);

const cx = [787.5, 810.3, 829.7, 848.4, 865.4, 880.4, 895.4, 907.4, 918.5, 930, 938.4, 947.7, 956.4, 963.7, 970.4, 976.4, 983.4, 989.7, 994.6, 999.3, 1004, 1008.7, 1013.5, 1018.3, 1023, 1027.7, 1032.4, 1037, 1041.7, 1046.4, 1050.7, 1055, 1059.4];
const ry = [319.5, 343.5, 364.5, 383.5, 400.5, 416, 431, 444.4, 456.4, 467.6, 477.6, 486.6, 495.6, 503.6, 510.6, 517.4, 524.4, 530.4, 536.6, 541.4, 546, 550.4, 554.7, 559.4, 564, 568.4, 572.8, 577.4, 582, 586.6, 591.6, 596.4, 600.7];
for (let k = 0; k < ry.length - 1; k++) {
  const color = k === 0 ? '#d3e6a9' : k === 1 ? '#d5e6ab' : k < 5 ? '#d7e7ad' : '#dae8b1';
  const n = k < 5 ? 20 : k < 8 ? 21 : k < 12 ? 23 : k < 17 ? 25 : 23;
  rowStrip(ry[k], ry[k + 1], spread(cx[k], R, n).slice(0, -1), color);
  colStrip(cx[k], cx[k + 1], spread(ry[k + 1], B, n - 1), [color]);
}
rect(1059.4, 600.7, R - 1059.4, B - 600.7, '#b9bcae');
for (let i = 1; i < 7; i++) {
  line(1059.4 + i * 2, 600.7, 1059.4 + i * 2, B);
  line(1059.4, 600.7 + i * 2, R, 600.7 + i * 2);
}

const labels = [
  [368, 193, 'Noida', 1], [368, 284, 'New Town', 1], [368, 367, 'Thane West', 1], [368, 433.5, 'Mira Road East'],
  [368, 487, 'Rajarhat'], [368, 535, 'Kharghar'], [368, 581.500, 'Ulwe'],
  [479, 193, 'Tangra'], [479, 256.500, 'Dum Dum'], [479, 311, 'Garia'], [479, 364.500, 'Howrah'], [479, 412, 'Behala'],
  [479, 452.500, 'Nala Sopara'], [479, 490, 'Tollygunge'], [479, 524.500, 'Madhyamgram'], [479, 558, 'Borivali West'], [479, 593, 'Kalyan West'],
  [554.500, 236, 'Uttam'], [554.500, 248, 'Nagar'], [554.500, 278, 'Andheri'], [554.500, 290, 'West'], [554.500, 320.500, 'Keshtopur'],
  [554.500, 362, 'Powai'], [554.500, 402, 'Alipore'], [554.500, 442, 'Panvel'], [554.500, 481.500, 'Electronic'], [554.500, 493.500, 'City Phase'],
  [554.500, 520, 'Chembur'], [554.500, 556, 'Malad'], [554.500, 568, 'West'], [554.500, 593, 'Vasant'], [554.500, 605, 'Kunj'],
  [613, 193, 'Ambattur'], [613, 231.500, 'Kandivali'], [613, 243.500, 'East'], [613, 268, 'Sonarpur'], [613, 337, 'Virar'],
  [613, 403.500, 'Attibele'], [613, 463.500, 'Varthur'], [613, 574, 'Harlur'],
  [664.500, 400, 'Boisar'], [664.500, 426, 'Tiljala'], [703.500, 343.500, 'Delhi'], [703.500, 436.500, 'Kovur'], [703.500, 546, 'ITPL'],
  [736.500, 454.500, 'Juhu'], [777, 236.500, 'Om'], [919.500, 193, 'RR'], [999, 193, 'New']
];
document.getElementById('treemap').innerHTML =
  '<rect x="362.5" y="177.5" width="713.5" height="440.5" fill="#fff" stroke="#bcbcc4"/>' + out.join('') +
  `<path d="${lines.join('')}" fill="none" stroke="#9c9da5" stroke-opacity=".85" stroke-width="1"/>` +
  `<rect x="365.5" y="180.5" width="707" height="434" fill="none" stroke="#abacb0"/>` +
  labels.map(([x, y, t, inv]) => `<text class="lbl${inv ? ' inv' : ''}" x="${x}" y="${y}">${t}</text>`).join('');
```
